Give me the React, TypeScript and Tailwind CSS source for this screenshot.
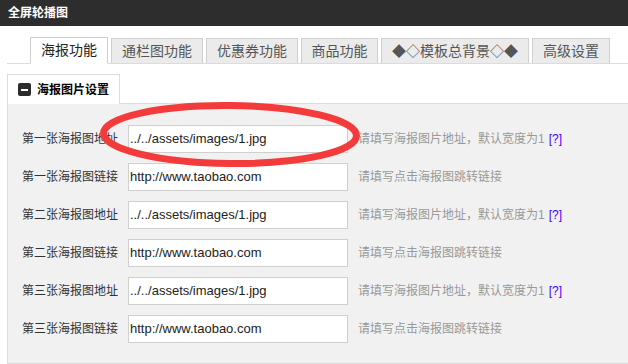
const font = "font-['Liberation_Sans','Noto_Sans_CJK_SC',sans-serif]";

const tabs = [
  { label: "海报功能", w: "w-[78px]", active: true },
  { label: "通栏图功能", w: "w-[92px]" },
  { label: "优惠券功能", w: "w-[92px]" },
  { label: "商品功能", w: "w-[77px]" },
  { label: "◆◇模板总背景◇◆", w: "w-[148px]" },
  { label: "高级设置", w: "w-[78px]" },
];

const rows = [
  { label: "第一张海报图地址", value: "../../assets/images/1.jpg", hint: "请填写海报图片地址，默认宽度为1", help: true },
  { label: "第一张海报图链接", value: "http://www.taobao.com", hint: "请填写点击海报图跳转链接" },
  { label: "第二张海报图地址", value: "../../assets/images/1.jpg", hint: "请填写海报图片地址，默认宽度为1", help: true },
  { label: "第二张海报图链接", value: "http://www.taobao.com", hint: "请填写点击海报图跳转链接" },
  { label: "第三张海报图地址", value: "../../assets/images/1.jpg", hint: "请填写海报图片地址，默认宽度为1", help: true },
  { label: "第三张海报图链接", value: "http://www.taobao.com", hint: "请填写点击海报图跳转链接" },
];

export default function App() {
  return (
    <div className={`relative w-[628px] h-[364px] overflow-hidden bg-white ${font}`}>
      {/* title bar */}
      <div className="h-[26px] bg-[#2d2d2d] text-white text-[12px] font-bold pl-[8px] flex items-center">
        全屏轮播图
      </div>

      {/* tabs */}
      <div className="mt-[11px] ml-[7px] h-[27px] border-b border-[#dcdcdc] pl-[23px] flex items-end gap-[3px]">
        {tabs.map((t) =>
          t.active ? (
            <div
              key={t.label}
              className={`${t.w} h-[27px] -mb-px bg-white border border-[#cfcfcf] border-b-white flex items-center justify-center text-[14px] text-[#222]`}
            >
              {t.label}
            </div>
          ) : (
            <div
              key={t.label}
              className={`${t.w} h-[25px] bg-[#ebebeb] border border-[#cfcfcf] border-b-0 flex items-center justify-center text-[14px] text-[#555]`}
            >
              {t.label}
            </div>
          ),
        )}
      </div>

      {/* panel */}
      <div className="mt-[10px] ml-[7px]">
        <div className="flex">
          <div className="w-[113px] h-[30px] bg-white border border-[#dcdcdc] border-b-0 flex items-center pl-[10px] gap-[6px]">
            <span className="w-[13px] h-[13px] rounded-[2px] bg-[#2b2b2b] flex items-center justify-center">
              <span className="w-[7px] h-[2px] bg-white" />
            </span>
            <span className="text-[12px] font-bold text-black">海报图片设置</span>
          </div>
          <div className="flex-1 border-b border-[#dcdcdc]" />
        </div>
        <div className="bg-[#f1f1f1] border-l border-b border-[#dcdcdc] pt-[21px] pb-[20px] pl-[14px] flex flex-col gap-[10px]">
          {rows.map((r, i) => (
            <div key={i} className="flex items-center h-[28px]">
              <div className="w-[106px] text-[12px] text-[#333] whitespace-nowrap">{r.label}</div>
              <div className="w-[220px] h-[28px] bg-white border border-[#cfcfcf] flex items-center pl-[1px] text-[13px] text-[#222]">
                {r.value}
              </div>
              <div className="ml-[10px] text-[12px] text-[#999] whitespace-nowrap">
                {r.hint}
                {r.help && (
                  <span className="ml-[4px] text-[#3a00ff]">[?]</span>
                )}
              </div>
            </div>
          ))}
        </div>
      </div>

      {/* red annotation */}
      <svg className="absolute left-0 top-0 pointer-events-none" width="628" height="364">
        <ellipse
          cx="230"
          cy="134.5"
          rx="126.5"
          ry="29"
          fill="none"
          stroke="#f43b3b"
          strokeWidth="7"
          transform="rotate(0.6 230 134.5)"
        />
      </svg>
    </div>
  );
}
